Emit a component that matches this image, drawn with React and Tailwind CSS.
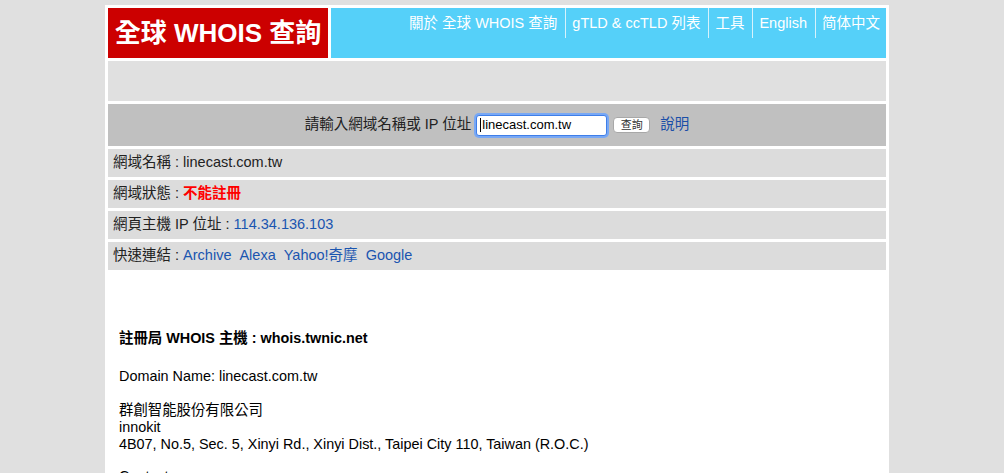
export default function App() {
  const font = { fontFamily: '"Liberation Sans", "Noto Sans CJK TC", sans-serif' };

  const nav = ["關於 全球 WHOIS 查詢", "gTLD & ccTLD 列表", "工具", "English", "简体中文"];

  return (
    <div className="min-h-screen bg-[#e0e0e0] pt-[5px]" style={font}>
      <div className="ml-[105px] w-[784px] bg-white p-[3px] flex flex-col gap-[3px] min-h-[468px]">
        {/* header */}
        <div className="flex gap-[3px] h-[50px]">
          <div className="w-[220px] bg-[#cc0000] flex items-center justify-center text-white font-bold text-[26px] leading-none">
            全球 WHOIS 查詢
          </div>
          <div className="flex-1 bg-[#55d0f9] flex justify-end items-start">
            {nav.map((item, i) => (
              <a
                key={item}
                className={
                  "h-[30px] flex items-center pl-[6px] text-white text-[14.5px] leading-none " +
                  (i > 0 ? "border-l border-[#d6f2fc] " : "") +
                  (i < nav.length - 1 ? "pr-[8px]" : "pr-[6px]")
                }
              >
                {item}
              </a>
            ))}
          </div>
        </div>

        <div className="h-[40px] bg-[#e0e0e0]"></div>

        {/* search */}
        <div className="h-[42px] bg-[#c0c0c0] flex items-center justify-center text-[14.5px] text-[#222]">
          <span>請輸入網域名稱或 IP 位址</span>
          <div className="ml-[5px] w-[131px] h-[21px] bg-white rounded-[3px] border border-[#3f7ee8] shadow-[0_0_0_2px_#78a8f5] flex items-center pl-[3px] text-[13px] text-black">
            <span className="w-px h-[14px] bg-black mr-[1px]"></span>
            linecast.com.tw
          </div>
          <button className="ml-[6px] w-[37px] h-[16px] bg-white border border-[#a8a8a8] rounded-[4px] text-[11px] leading-none text-[#333] flex items-center justify-center">
            查詢
          </button>
          <a className="ml-[10px] text-[#1a4fa8]">說明</a>
        </div>

        {/* info rows */}
        <div className="h-[28px] bg-[#dcdcdc] flex items-center pl-[5px] text-[14.5px] text-[#222]">
          網域名稱 : linecast.com.tw
        </div>
        <div className="h-[28px] bg-[#dcdcdc] flex items-center pl-[5px] text-[14.5px] text-[#222] whitespace-pre">
          網域狀態 : <span className="text-[#ff0000] font-bold">不能註冊</span>
        </div>
        <div className="h-[28px] bg-[#dcdcdc] flex items-center pl-[5px] text-[14.5px] text-[#222] whitespace-pre">
          網頁主機 IP 位址 : <a className="text-[#1a55b0]">114.34.136.103</a>
        </div>
        <div className="h-[28px] bg-[#dcdcdc] flex items-center pl-[5px] text-[14.5px] text-[#222] whitespace-pre">
          快速連結 : <a className="text-[#1a55b0] mr-[8px]">Archive</a>
          <a className="text-[#1a55b0] mr-[8px]">Alexa</a>
          <a className="text-[#1a55b0] mr-[8px]">Yahoo!奇摩</a>
          <a className="text-[#1a55b0]">Google</a>
        </div>

        {/* whois */}
        <div className="pt-[57px] pl-[11px] text-[14.4px] leading-[17px] text-black">
          <div className="font-bold">註冊局 WHOIS 主機 : whois.twnic.net</div>
          <div className="mt-[21px] whitespace-pre-line">
            {"Domain Name: linecast.com.tw\n\n群創智能股份有限公司\ninnokit\n4B07, No.5, Sec. 5, Xinyi Rd., Xinyi Dist., Taipei City 110, Taiwan (R.O.C.)"}
          </div>
          <div className="mt-[15px]">Contact:</div>
        </div>
      </div>
    </div>
  );
}
